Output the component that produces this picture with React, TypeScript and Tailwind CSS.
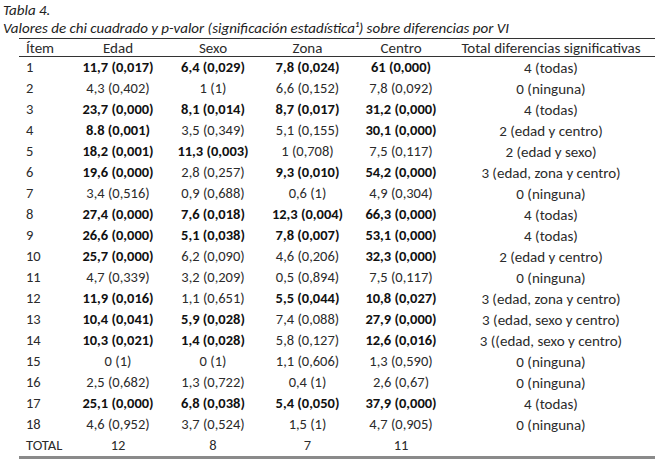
const rows: [string, string, string, string, string, string][] = [
  ['1', '*11,7 (0,017)', '*6,4 (0,029)', '*7,8 (0,024)', '*61 (0,000)', '4 (todas)'],
  ['2', '4,3 (0,402)', '1 (1)', '6,6 (0,152)', '7,8 (0,092)', '0 (ninguna)'],
  ['3', '*23,7 (0,000)', '*8,1 (0,014)', '*8,7 (0,017)', '*31,2 (0,000)', '4 (todas)'],
  ['4', '*8.8 (0,001)', '3,5 (0,349)', '5,1 (0,155)', '*30,1 (0,000)', '2 (edad y centro)'],
  ['5', '*18,2 (0,001)', '*11,3 (0,003)', '1 (0,708)', '7,5 (0,117)', '2 (edad y sexo)'],
  ['6', '*19,6 (0,000)', '2,8 (0,257)', '*9,3 (0,010)', '*54,2 (0,000)', '3 (edad, zona y centro)'],
  ['7', '3,4 (0,516)', '0,9 (0,688)', '0,6 (1)', '4,9 (0,304)', '0 (ninguna)'],
  ['8', '*27,4 (0,000)', '*7,6 (0,018)', '*12,3 (0,004)', '*66,3 (0,000)', '4 (todas)'],
  ['9', '*26,6 (0,000)', '*5,1 (0,038)', '*7,8 (0,007)', '*53,1 (0,000)', '4 (todas)'],
  ['10', '*25,7 (0,000)', '6,2 (0,090)', '4,6 (0,206)', '*32,3 (0,000)', '2 (edad y centro)'],
  ['11', '4,7 (0,339)', '3,2 (0,209)', '0,5 (0,894)', '7,5 (0,117)', '0 (ninguna)'],
  ['12', '*11,9 (0,016)', '1,1 (0,651)', '*5,5 (0,044)', '*10,8 (0,027)', '3 (edad, zona y centro)'],
  ['13', '*10,4 (0,041)', '*5,9 (0,028)', '7,4 (0,088)', '*27,9 (0,000)', '3 (edad, sexo y centro)'],
  ['14', '*10,3 (0,021)', '*1,4 (0,028)', '5,8 (0,127)', '*12,6 (0,016)', '3 ((edad, sexo y centro)'],
  ['15', '0 (1)', '0 (1)', '1,1 (0,606)', '1,3 (0,590)', '0 (ninguna)'],
  ['16', '2,5 (0,682)', '1,3 (0,722)', '0,4 (1)', '2,6 (0,67)', '0 (ninguna)'],
  ['17', '*25,1 (0,000)', '*6,8 (0,038)', '*5,4 (0,050)', '*37,9 (0,000)', '4 (todas)'],
  ['18', '4,6 (0,952)', '3,7 (0,524)', '1,5 (1)', '4,7 (0,905)', '0 (ninguna)'],
  ['TOTAL', '12', '8', '7', '11', ''],
]

const cols = 'grid grid-cols-[51px_96px_94px_95px_92px_208px]'

const Cell = ({ v }: { v: string }) => {
  const bold = v.startsWith('*')
  return (
    <div className={`text-center whitespace-nowrap ${bold ? 'font-bold text-[#111]' : ''}`}>
      {bold ? v.slice(1) : v}
    </div>
  )
}

const App = () => {
  return (
    <div className="w-[658px] h-[459px] bg-white text-[#2b2b2b] font-['Carlito','Lato',sans-serif] text-[14.5px] overflow-hidden">
      <div className="pl-[3px] pt-[1px] italic text-[#222] text-[15px] leading-[18px]">
        <div>Tabla 4.</div>
        <div>
          Valores de chi cuadrado y p-valor (significación estadística¹) sobre diferencias por VI
        </div>
      </div>
      <div className="ml-[19px] w-[636px] mt-[1px] border-t border-[#333]">
        <div className={`${cols} h-[18px] pt-[2px] items-center leading-[15px] border-b border-[#333] text-[15px]`}>
          <div className="pl-[7px]">Ítem</div>
          <div className="text-center">Edad</div>
          <div className="text-center">Sexo</div>
          <div className="text-center">Zona</div>
          <div className="text-center">Centro</div>
          <div className="text-center whitespace-nowrap">Total diferencias significativas</div>
        </div>
        {rows.map((r) => (
          <div key={r[0]} className={`${cols} h-[21px] items-center`}>
            <div className="pl-[7px]">{r[0]}</div>
            <Cell v={r[1]} />
            <Cell v={r[2]} />
            <Cell v={r[3]} />
            <Cell v={r[4]} />
            <div className="text-center whitespace-nowrap text-[15px]">{r[5]}</div>
          </div>
        ))}
        <div className="h-[3px] bg-[#8a8a8a]" />
      </div>
    </div>
  )
}

export default App
